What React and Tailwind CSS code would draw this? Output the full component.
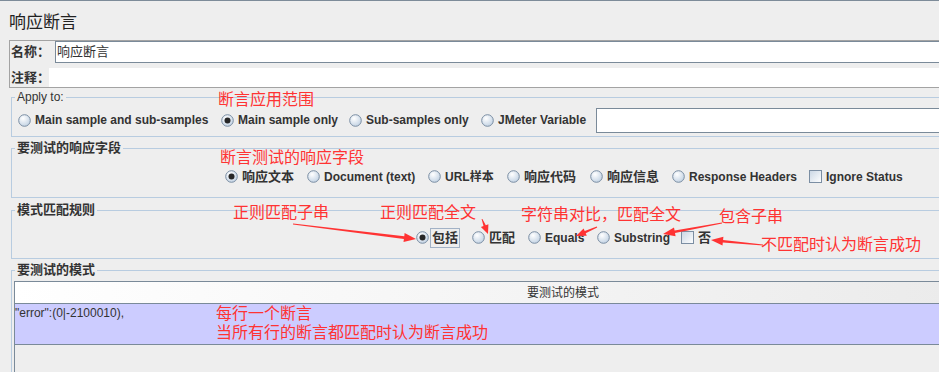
import React from 'react';

const FONT = "font-['Liberation_Sans','Noto_Sans_CJK_SC',sans-serif]";

// tapered red arrow, thin at the tail and wide at the head
const arrow = (x1, y1, x2, y2, head = 12, headW = 4.5, shaft = 1.4) => {
  const dx = x2 - x1;
  const dy = y2 - y1;
  const len = Math.hypot(dx, dy);
  const ux = dx / len;
  const uy = dy / len;
  const nx = -uy;
  const ny = ux;
  const bx = x2 - ux * head;
  const by = y2 - uy * head;
  const p = (x, y) => `${x.toFixed(1)},${y.toFixed(1)}`;
  return [
    p(x1 + nx * 0.4, y1 + ny * 0.4),
    p(bx + nx * shaft, by + ny * shaft),
    p(bx + nx * headW, by + ny * headW),
    p(x2, y2),
    p(bx - nx * headW, by - ny * headW),
    p(bx - nx * shaft, by - ny * shaft),
    p(x1 - nx * 0.4, y1 - ny * 0.4),
  ].join(' ');
};

const arrows = [
  arrow(293, 223, 416, 238),
  arrow(482, 218, 488, 233, 9, 4, 1.2),
  arrow(597, 226, 576, 235, 10, 4, 1.2),
  arrow(722, 222, 663, 233, 12, 4.5, 1.3),
  arrow(763, 244, 711, 239, 12, 4.5, 1.3),
];

const notes = [
  { text: '断言应用范围', cls: 'left-[218px] top-[91px]' },
  { text: '断言测试的响应字段', cls: 'left-[220px] top-[149px]' },
  { text: '正则匹配子串', cls: 'left-[233px] top-[204px]' },
  { text: '正则匹配全文', cls: 'left-[380px] top-[204px]' },
  { text: '字符串对比，匹配全文', cls: 'left-[521px] top-[206px]' },
  { text: '包含子串', cls: 'left-[719px] top-[208px]' },
  { text: '不匹配时认为断言成功', cls: 'left-[761px] top-[236px]' },
  { text: '每行一个断言', cls: 'left-[216px] top-[305px]' },
  { text: '当所有行的断言都匹配时认为断言成功', cls: 'left-[216px] top-[324px]' },
];

const Radio = ({ checked }) => (
  <svg width="13" height="13" viewBox="0 0 13 13" className="shrink-0">
    <circle cx="6.5" cy="6.5" r="5.8" fill="url(#radioFill)" stroke="#7b8ea3" strokeWidth="1" />
    {checked && <circle cx="6.5" cy="6.5" r="3" fill="#262626" />}
  </svg>
);

const Check = () => (
  <svg width="13" height="13" viewBox="0 0 13 13" className="shrink-0">
    <rect x="0.5" y="0.5" width="12" height="12" fill="url(#checkFill)" stroke="#7b8ea3" strokeWidth="1" />
  </svg>
);

const Option = ({ className = '', checked, cjk, box, children }) => (
  <div className={`flex items-center gap-[4px] shrink-0 whitespace-nowrap ${className}`}>
    {box ? <Check /> : <Radio checked={checked} />}
    <span className={cjk ? 'text-[13px] font-bold leading-[16px]' : 'text-[12px] font-bold leading-[14px]'}>
      {children}
    </span>
  </div>
);

const Legend = ({ children, plain }) => (
  <legend
    className={`ml-[3px] px-[2px] leading-[14px] whitespace-nowrap ${plain ? 'text-[12px]' : 'text-[13px] font-bold'}`}
  >
    {children}
  </legend>
);

const App = () => {
  return (
    <div className={`relative w-[939px] h-[372px] overflow-hidden bg-[#eeeeee] border-t border-[#7d8b99] text-[#333] ${FONT}`}>
      <svg width="0" height="0" className="absolute">
        <defs>
          <radialGradient id="radioFill" cx="38%" cy="32%" r="75%">
            <stop offset="0" stopColor="#ffffff" />
            <stop offset="1" stopColor="#bfd0e2" />
          </radialGradient>
          <linearGradient id="checkFill" x1="0" y1="0" x2="1" y2="1">
            <stop offset="0" stopColor="#c9d6e4" />
            <stop offset="1" stopColor="#ffffff" />
          </linearGradient>
        </defs>
      </svg>

      <div className="pl-[9px] pt-[13px] h-[39px] text-[17px] leading-[17px] text-[#222]">响应断言</div>

      {/* name / comment */}
      <div className="ml-[9px] w-[940px] h-[48px] border border-[#a3a3a3] flex flex-col">
        <div className="flex h-[22px]">
          <div className="w-[45px] shrink-0 pl-[1px] flex items-center whitespace-nowrap text-[13px] font-bold">名称：</div>
          <div className="flex-1 border border-[#7a8a99] bg-white flex items-center pl-[1px] text-[13px]">响应断言</div>
        </div>
        <div className="flex mt-[5px] h-[19px]">
          <div className="w-[39px] shrink-0 pl-[1px] flex items-center whitespace-nowrap text-[13px] font-bold">注释：</div>
          <div className="relative flex-1 bg-white"></div>
        </div>
      </div>

      <fieldset className="ml-[11px] mt-[2px] w-[940px] border border-[#b8cce0]">
        <Legend plain>Apply to:</Legend>
        <div className="flex items-center h-[32px] pl-[6px]">
          <Option className="w-[203px]">Main sample and sub-samples</Option>
          <Option className="w-[128px]" checked>Main sample only</Option>
          <Option className="w-[132px]">Sub-samples only</Option>
          <Option className="w-[115px]">JMeter Variable</Option>
          <div className="flex-1 h-[25px] border border-[#7a8a99] bg-white"></div>
        </div>
      </fieldset>

      <fieldset className="ml-[11px] mt-[4px] w-[940px] border border-[#b8cce0]">
        <Legend>要测试的响应字段</Legend>
        <div className="flex items-center h-[42px] pt-[1px] pl-[213px]">
          <Option className="w-[82px]" checked cjk>响应文本</Option>
          <Option className="w-[121px]">Document (text)</Option>
          <Option className="w-[79px]">URL样本</Option>
          <Option className="w-[83px]" cjk>响应代码</Option>
          <Option className="w-[82px]" cjk>响应信息</Option>
          <Option className="w-[137px]">Response Headers</Option>
          <Option box>Ignore Status</Option>
        </div>
      </fieldset>

      <fieldset className="ml-[11px] mt-[5px] w-[940px] border border-[#b8cce0]">
        <Legend>模式匹配规则</Legend>
        <div className="flex items-center h-[41px] pl-[404px]">
          <div className="flex items-center gap-[1px] w-[56px] shrink-0">
            <Radio checked />
            <span className="h-[20px] border border-[#a2b2c6] px-[1px] flex items-center whitespace-nowrap text-[13px] font-bold">包括</span>
          </div>
          <Option className="w-[56px]" cjk>匹配</Option>
          <Option className="w-[69px]">Equals</Option>
          <Option className="w-[84px]">Substring</Option>
          <Option box cjk>否</Option>
        </div>
      </fieldset>

      <fieldset className="ml-[11px] mt-[4px] w-[940px] border border-[#b8cce0]">
        <Legend>要测试的模式</Legend>
        <div className="mt-[4px] ml-[2px] h-[120px] border-l border-t border-[#7a8a99]">
          <div className="h-[22px] border-b border-[#7a8a99] bg-gradient-to-r from-white to-[#ebebeb] flex items-center pl-[512px] text-[12px]">
            要测试的模式
          </div>
          <div className="h-[41px] border-b border-[#7a8a99] bg-[#ccccff] pt-[2px] text-[12px] leading-[14px] text-[#333]">
            "error":(0|-2100010),
          </div>
        </div>
      </fieldset>

      {notes.map((n) => (
        <div key={n.text} className={`absolute whitespace-nowrap text-[16px] leading-[16px] text-[#ff3333] ${n.cls}`}>
          {n.text}
        </div>
      ))}

      <svg className="absolute left-0 top-0 pointer-events-none" width="939" height="372">
        {arrows.map((pts, i) => (
          <polygon key={i} points={pts} fill="#ff3333" />
        ))}
      </svg>
    </div>
  );
};

export default App;
